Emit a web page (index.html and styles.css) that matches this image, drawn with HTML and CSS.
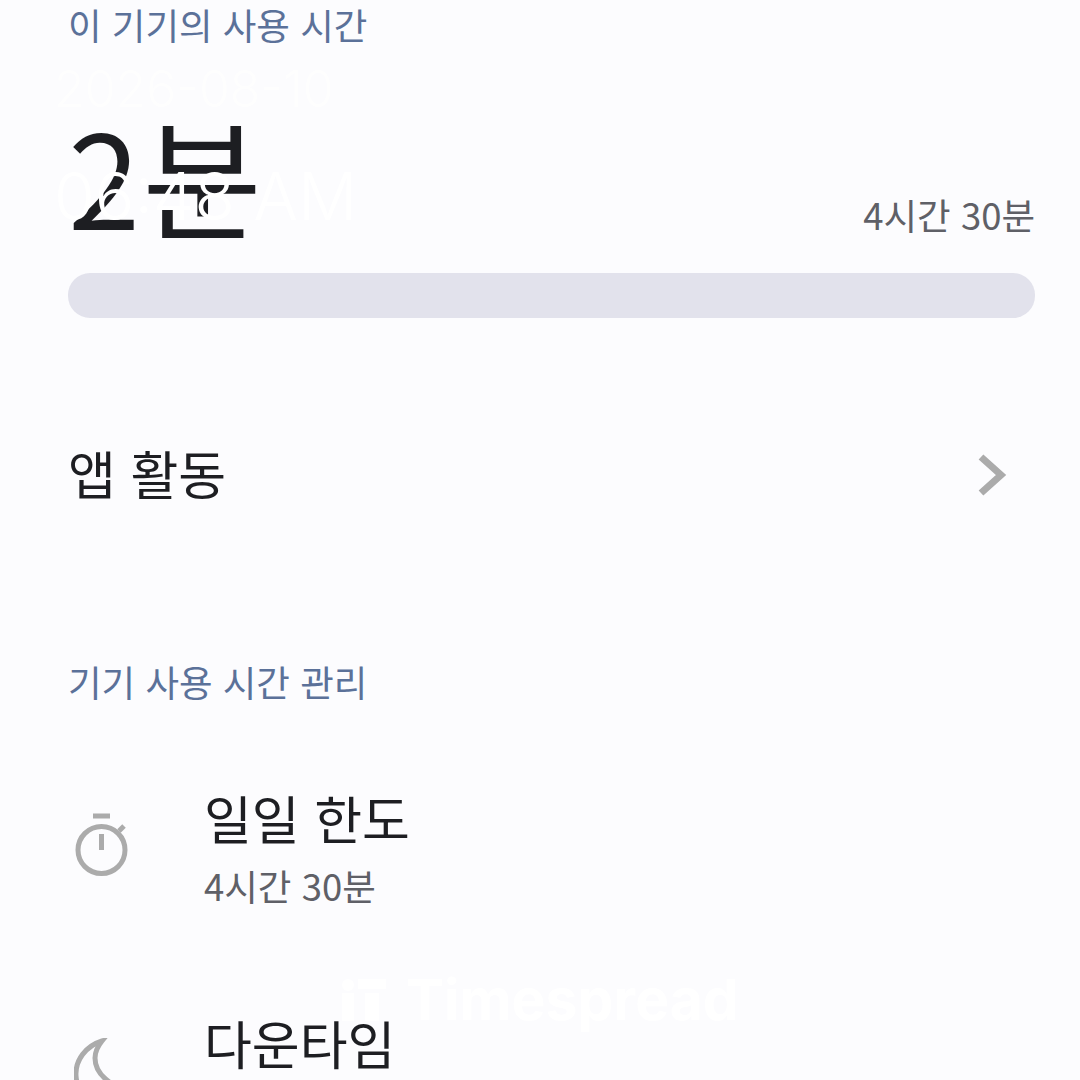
FILE: index.html
```html
<!DOCTYPE html>
<html lang="ko">
<head>
    <title>기기 사용 시간</title>
    <meta charset="utf-8">
    <meta name="viewport" content="width=device-width, initial-scale=1">
    <link rel="stylesheet" href="styles.css">
</head>
<body>
<main class="screen">
    <section class="usage">
        <h2 class="section-title">이 기기의 사용 시간</h2>
        <div class="usage-summary">
            <span class="usage-value">2분</span>
            <span class="usage-limit">4시간 30분</span>
        </div>
        <div class="usage-bar"></div>
    </section>

    <div class="activity-row">
        <span class="activity-title">앱 활동</span>
        <svg class="chevron" viewBox="0 0 30 44" width="30" height="44">
            <path d="M4 4 L24 22 L4 40" fill="none" stroke="#ababab" stroke-width="7"/>
        </svg>
    </div>

    <section class="manage">
        <h2 class="section-title">기기 사용 시간 관리</h2>
        <div class="manage-row">
            <svg class="row-icon" viewBox="0 0 56 66" width="56" height="66">
                <g fill="none" stroke="#ababab" stroke-width="5">
                    <circle cx="27.5" cy="37" r="23.5"/>
                    <path d="M19 3 H36"/>
                    <path d="M27.5 21 V37"/>
                    <path d="M45 18 L50 13"/>
                </g>
            </svg>
            <div class="row-text">
                <div class="row-title">일일 한도</div>
                <div class="row-sub">4시간 30분</div>
            </div>
        </div>
        <div class="manage-row">
            <svg class="row-icon" viewBox="0 0 56 66" width="56" height="66">
                <path d="M28 3 C12 8 1 22 2 38 C3 54 16 64 30 64 C40 64 50 59 54 50 C38 50 21 36 21 20 C21 14 24 8 28 3 Z" fill="none" stroke="#ababab" stroke-width="5"/>
            </svg>
            <div class="row-text">
                <div class="row-title">다운타임</div>
            </div>
        </div>
    </section>
</main>

<div class="stamp">
    <div class="stamp-date">2026-08-10</div>
    <div class="stamp-time">06:48 AM</div>
</div>
<div class="brand">
    <svg class="brand-mark" viewBox="0 0 46 42" width="46" height="42">
        <circle cx="8" cy="6" r="6" fill="#ffffff"/>
        <rect x="2" y="14" width="12" height="28" fill="#ffffff"/>
        <rect x="18" y="0" width="28" height="10" fill="#ffffff"/>
        <rect x="25" y="14" width="14" height="28" fill="#ffffff"/>
    </svg>
    <span>Timespread</span>
</div>
</body>
</html>
```

FILE: styles.css
```css
*, *::before, *::after {
    margin: 0;
    padding: 0;
    box-sizing: border-box;
}

html, body {
    height: 100%;
    overflow: hidden;
}

body {
    position: relative;
    background-color: #fcfcfe;
    color: #1d1e22;
    font-family: "Noto Sans CJK KR", "Inter", sans-serif;
}

.screen {
    padding: 0 45px 0 68px;
}

.section-title {
    color: #5b7199;
    font-size: 36.5px;
    font-weight: 400;
    line-height: 50px;
}

.usage-summary {
    display: flex;
    align-items: flex-end;
    justify-content: space-between;
    height: 203px;
}

.usage-value {
    margin-bottom: 10px;
    font-size: 130px;
    font-weight: 400;
    line-height: 140px;
    letter-spacing: 2px;
}

.usage-limit {
    margin-bottom: 13px;
    color: #5f6067;
    font-size: 36.5px;
    line-height: 50px;
}

.usage-bar {
    height: 45px;
    margin-top: 20px;
    border-radius: 22px;
    background-color: #e2e2ec;
}

.activity-row {
    display: flex;
    align-items: center;
    justify-content: space-between;
    margin-top: 125px;
    padding-right: 28px;
}

.activity-title {
    font-size: 52px;
    line-height: 60px;
}

.chevron {
    position: relative;
    top: 2px;
}

.manage {
    margin-top: 154px;
}

.manage-row {
    display: flex;
    align-items: flex-start;
    gap: 74px;
    margin-top: 76px;
    margin-left: 6px;
}

.manage-row + .manage-row {
    margin-top: 97px;
}

.row-icon {
    flex-shrink: 0;
    margin-top: 30px;
}

.row-title {
    font-size: 52px;
    line-height: 70px;
}

.row-sub {
    margin-top: 8px;
    color: #5f6067;
    font-size: 36.5px;
    line-height: 50px;
}

/* date stamp and logo sit on top of the screenshot */
.stamp {
    position: absolute;
    top: 56px;
    left: 54px;
    color: #ffffff;
    font-family: "Inter", sans-serif;
    font-weight: 300;
}

.stamp-date {
    font-size: 50px;
    line-height: 66px;
    opacity: 0.85;
}

.stamp-time {
    margin-top: 34px;
    font-size: 66px;
    line-height: 80px;
}

.brand {
    position: absolute;
    top: 970px;
    left: 340px;
    display: flex;
    align-items: center;
    gap: 20px;
    color: #ffffff;
    font-family: "Inter", sans-serif;
    font-size: 57px;
    font-weight: 700;
    line-height: 60px;
}
```
